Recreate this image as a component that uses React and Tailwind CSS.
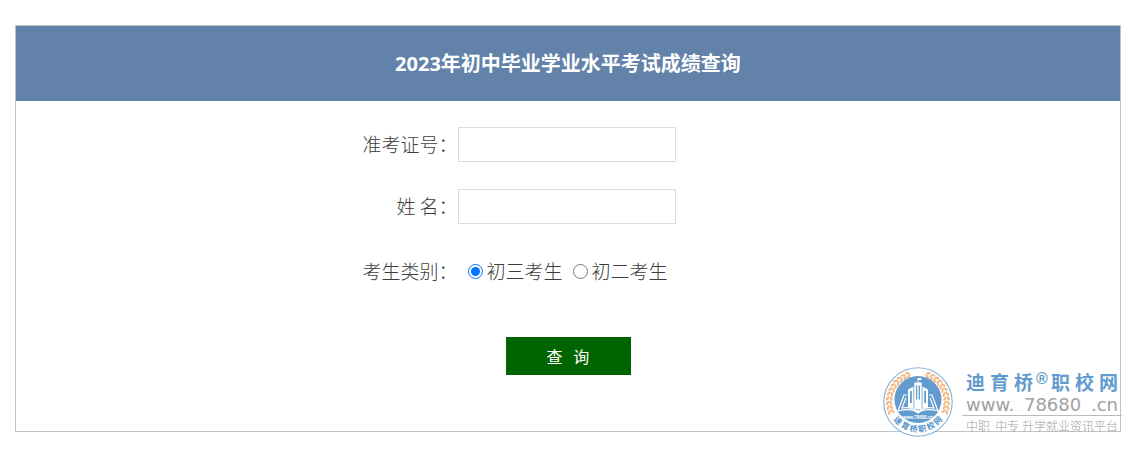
function Wreath() {
  return (
    <g fill="#f5b882">
      {[1, -1].map((side) => (
        <g key={side} transform={`translate(35 35) scale(${side} 1)`}>
          {[112, 103, 94, 85, 76, 67, 58, 49, 40, 31, 22].map((a) => (
            <g key={a} transform={`rotate(${-a}) translate(0 -28.800)`}>
              <ellipse cx="0" cy="-2" rx="2.600" ry="1.150" transform="rotate(32)" />
              <ellipse cx="0" cy="2" rx="2.600" ry="1.150" transform="rotate(-32)" />
            </g>
          ))}
        </g>
      ))}
    </g>
  );
}

function Emblem() {
  const ring = [
    ["迪", 47],
    ["育", 28],
    ["桥", 9],
    ["职", -9],
    ["校", -28],
    ["网", -47],
  ];
  return (
    <svg viewBox="0 0 70 70" className="size-[70px] shrink-0" aria-hidden="true">
      <circle cx="35" cy="35" r="34.2" fill="#fff" stroke="#86b0d6" strokeWidth="1.1" />
      <Wreath />
      <circle cx="35" cy="32.500" r="23.500" fill="#629bce" />
      <g fill="#fff">
        <path d="M25 22.500l5.500-3V41H25zM31.300 15.500h7.400V42h-7.400zM39.500 19.500l5.500 3V41h-5.500z" />
        <path d="M34.600 11h.8v5h-.8zM35.400 11h3v2h-3z" />
      </g>
      <g fill="#629bce">
        <path d="M27 24h1.800v12H27zM33 18.500h1.300v14H33zM35.700 18.500H37v14h-1.300zM41.200 24H43v12h-1.800z" />
      </g>
      <path
        d="M24 28h-3l-6 16c8-2 15-2 20 2c5-4 12-4 20-2l-6-16h-3M23 31l-4 10c7-1 12 0 16 4c4-4 9-5 16-4l-4-10M35 38v8"
        fill="none"
        stroke="#fff"
        strokeWidth="1.2"
      />
      <text x="35" y="52" textAnchor="middle" fontSize="4.500" fontWeight="700" fill="#fff" fontFamily="Liberation Sans, sans-serif">
        www.78680.cn
      </text>
      <g fill="#4f8fc8" fontSize="8" fontWeight="700" textAnchor="middle" fontFamily="Noto Sans CJK SC, sans-serif">
        {ring.map(([char, angle]) => (
          <text key={char} transform={`rotate(${angle} 35 35)`} x="35" y="65">
            {char}
          </text>
        ))}
      </g>
    </svg>
  );
}

function Brand() {
  return (
    <div className="pointer-events-none absolute -right-0.5 -bottom-1.5 flex items-start gap-[9px]">
      <Emblem />
      <div className="w-40 pt-1 text-[#a0a0a0]">
        <p className="flex h-6 items-center justify-between px-1 font-['Noto_Sans','Noto_Sans_CJK_SC',sans-serif] text-[19px] leading-6 font-bold whitespace-nowrap text-[#629bce]">
          <span>迪 育 桥</span>
          <span className="self-start font-['Liberation_Sans',sans-serif] text-base leading-none">®</span>
          <span>职 校 网</span>
        </p>
        <p className="flex h-5 items-center justify-between px-1 font-['DejaVu_Sans',sans-serif] text-lg leading-5">
          <span>www.</span>
          <span>78680</span>
          <span>.cn</span>
        </p>
        <p className="border-t border-[#bcbcbc] px-1 pt-0.5 font-['Noto_Sans_CJK_SC',sans-serif] text-xs leading-4 font-light whitespace-pre">
          中职  中专 升学就业资讯平台
        </p>
      </div>
    </div>
  );
}

function Field({ id, label }) {
  return (
    <div className="flex h-[62px] items-center">
      <label htmlFor={id} className="w-2/5 text-right">
        {label}
      </label>
      <input id={id} type="text" className="h-[35px] w-[218px] border border-[#dcdcdc] bg-white px-2 outline-none" />
    </div>
  );
}

function Choice({ label, value, defaultChecked }) {
  return (
    <label className="flex items-center gap-1">
      <input type="radio" name="category" value={value} defaultChecked={defaultChecked} className="size-[15px]" />
      {label}
    </label>
  );
}

export default function App() {
  return (
    <main className="bg-white pt-[25px] pr-[13px] pb-4 pl-[15px] font-['Noto_Sans_CJK_SC',sans-serif]">
      <section className="relative border border-[#c2c5c8]">
        <h1 className="bg-[#6282aa] py-6 text-center font-['Noto_Sans','Noto_Sans_CJK_SC',sans-serif] text-xl leading-[27px] font-bold text-white">
          2023年初中毕业学业水平考试成绩查询
        </h1>
        <form className="pt-3 pb-14 text-[19px] leading-7 font-light text-[#3c3c3c]" onSubmit={(e) => e.preventDefault()}>
          <Field id="ticket" label="准考证号：" />
          <Field id="name" label="姓 名：" />
          <div className="flex h-[68px] items-center" role="radiogroup" aria-labelledby="category">
            <span id="category" className="w-2/5 text-right">
              考生类别：
            </span>
            <div className="flex gap-2.5 pl-2.5">
              <Choice label="初三考生" value="3" defaultChecked />
              <Choice label="初二考生" value="2" />
            </div>
          </div>
          <div className="flex justify-center pt-8">
            <button type="submit" className="h-[38px] w-[125px] bg-[#006400] text-base font-normal whitespace-pre text-white">
              查   询
            </button>
          </div>
        </form>
        <Brand />
      </section>
    </main>
  );
}
